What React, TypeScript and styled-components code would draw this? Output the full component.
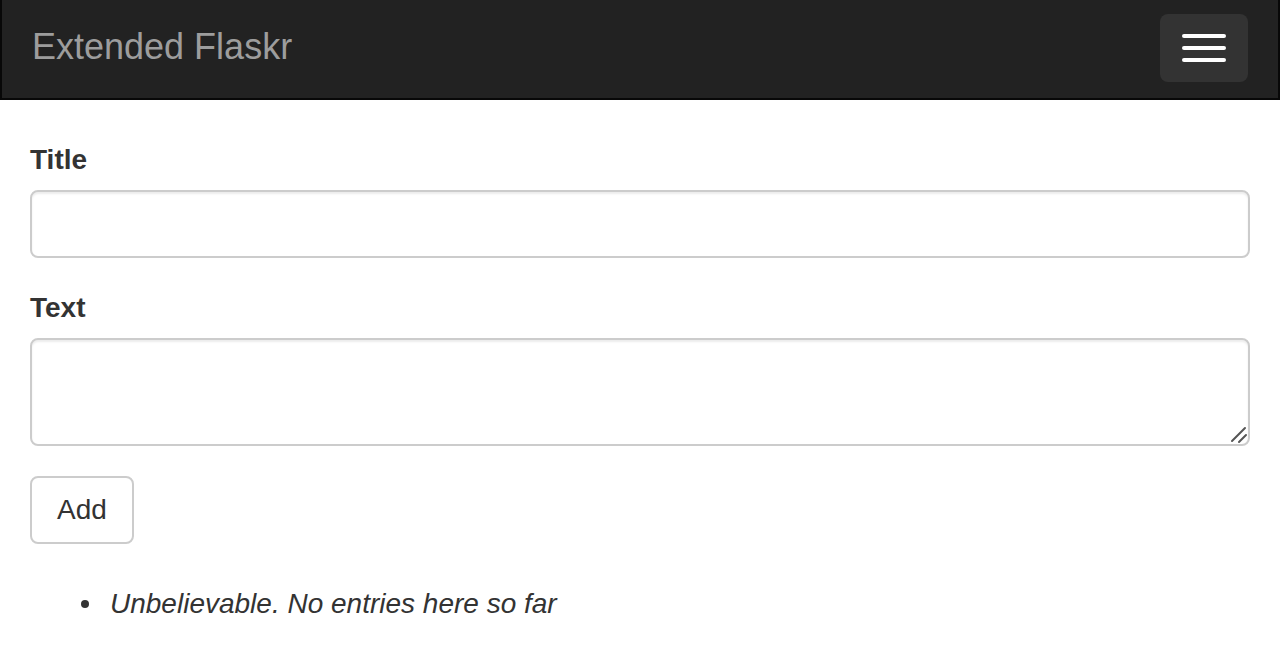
import React from "react";
import styled, { createGlobalStyle } from "styled-components";

const GlobalStyle = createGlobalStyle`
  * { box-sizing: border-box; }
  html, body { margin: 0; padding: 0; background: #fff; }
  body {
    font-family: "Liberation Sans", Arial, Helvetica, sans-serif;
    font-size: 28px;
    line-height: 40px;
    color: #333;
  }
`;

const Navbar = styled.nav`
  height: 100px;
  background: #222;
  border: 2px solid #080808;
  border-top: none;
  display: flex;
  align-items: center;
  justify-content: space-between;
  padding: 0 30px;
  margin-bottom: 40px;
`;

const Brand = styled.a`
  font-size: 36px;
  line-height: 40px;
  color: #9d9d9d;
  text-decoration: none;
  margin-top: -4px;
`;

const Toggle = styled.button`
  width: 88px;
  height: 68px;
  margin-top: -2px;
  background: #333;
  border: none;
  border-radius: 8px;
  display: flex;
  flex-direction: column;
  align-items: center;
  justify-content: center;
  gap: 8px;
  padding: 0;
`;

const IconBar = styled.span`
  display: block;
  width: 44px;
  height: 4px;
  border-radius: 2px;
  background: #fff;
`;

const Container = styled.main`
  padding: 0 30px;
`;

const Form = styled.form`
  display: flex;
  flex-direction: column;
  align-items: flex-start;
`;

const FormGroup = styled.div`
  width: 100%;
  margin-bottom: 30px;
  display: flex;
  flex-direction: column;
`;

const Label = styled.label`
  font-weight: bold;
  font-size: 28px;
  line-height: 40px;
  margin-bottom: 10px;
`;

const fieldStyles = `
  width: 100%;
  border: 2px solid #ccc;
  border-radius: 8px;
  box-shadow: inset 0 2px 2px rgba(0,0,0,.075);
  font-family: "Liberation Sans", Arial, sans-serif;
  font-size: 28px;
  line-height: 40px;
  color: #555;
  padding: 12px 24px;
  background: #fff;
  outline: none;
`;

const Input = styled.input`
  ${fieldStyles}
  height: 68px;
`;

const TextAreaWrap = styled.div`
  position: relative;
  width: 100%;
`;

const TextArea = styled.textarea`
  ${fieldStyles}
  height: 108px;
  resize: none;
  display: block;
`;

const Resizer = styled.svg`
  position: absolute;
  right: 0;
  bottom: 0;
  width: 20px;
  height: 20px;
  pointer-events: none;
`;

const Button = styled.button`
  height: 68px;
  padding: 12px 25px;
  font-family: "Liberation Sans", Arial, sans-serif;
  font-size: 28px;
  line-height: 40px;
  color: #333;
  background: #fff;
  border: 2px solid #ccc;
  border-radius: 8px;
`;

const Entries = styled.ul`
  margin: 40px 0 0;
  padding-left: 51px;
  list-style: none;
`;

const Entry = styled.li`
  display: flex;
  align-items: center;
  font-style: italic;
  font-size: 28px;
  line-height: 40px;

  &::before {
    content: "";
    width: 8px;
    height: 8px;
    border-radius: 50%;
    background: #333;
    margin-right: 21px;
    flex: none;
  }
`;

export default function App() {
  return (
    <>
      <GlobalStyle />
      <Navbar>
        <Brand href="#">Extended Flaskr</Brand>
        <Toggle type="button" aria-label="Toggle navigation">
          <IconBar />
          <IconBar />
          <IconBar />
        </Toggle>
      </Navbar>
      <Container>
        <Form onSubmit={(e) => e.preventDefault()}>
          <FormGroup>
            <Label htmlFor="title">Title</Label>
            <Input id="title" type="text" />
          </FormGroup>
          <FormGroup>
            <Label htmlFor="text">Text</Label>
            <TextAreaWrap>
              <TextArea id="text" rows={2} />
              <Resizer viewBox="0 0 20 20">
                <path d="M2 15 L15 2 M9 16 L16 9" stroke="#555" strokeWidth="2" strokeLinecap="round" fill="none" transform="translate(0,0)" />
              </Resizer>
            </TextAreaWrap>
          </FormGroup>
          <Button type="submit">Add</Button>
        </Form>
        <Entries>
          <Entry>Unbelievable. No entries here so far</Entry>
        </Entries>
      </Container>
    </>
  );
}
